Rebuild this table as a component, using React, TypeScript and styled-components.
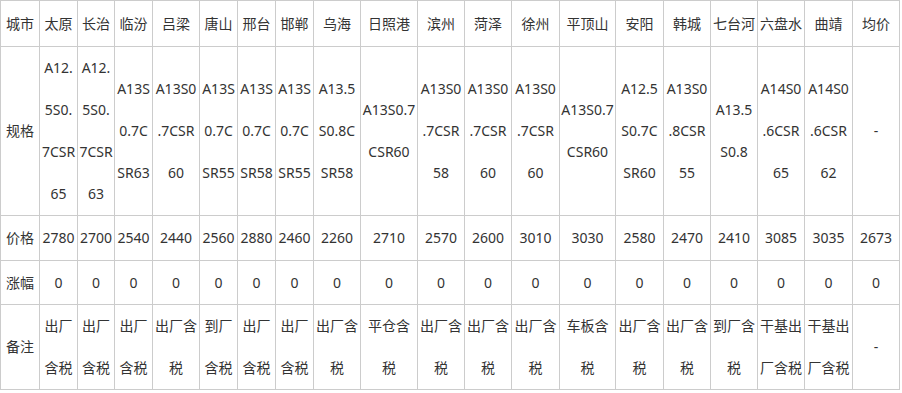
import { createGlobalStyle } from "styled-components";
import styled from "styled-components";

const GlobalStyle = createGlobalStyle`
  html, body {
    margin: 0;
    padding: 0;
    background: #fff;
  }
  body {
    font-family: "Noto Sans", "Noto Sans CJK SC", sans-serif;
    color: #333;
  }
`;

type City = {
  name: string;
  width: number;
  spec: string[];
  price: string;
  change: string;
  note: string[];
};

const cities: City[] = [
  { name: "太原", width: 38, spec: ["A12.", "5S0.", "7CSR", "65"], price: "2780", change: "0", note: ["出厂", "含税"] },
  { name: "长治", width: 37, spec: ["A12.", "5S0.", "7CSR", "63"], price: "2700", change: "0", note: ["出厂", "含税"] },
  { name: "临汾", width: 38, spec: ["A13S", "0.7C", "SR63"], price: "2540", change: "0", note: ["出厂", "含税"] },
  { name: "吕梁", width: 47, spec: ["A13S0", ".7CSR", "60"], price: "2440", change: "0", note: ["出厂含", "税"] },
  { name: "唐山", width: 38, spec: ["A13S", "0.7C", "SR55"], price: "2560", change: "0", note: ["到厂", "含税"] },
  { name: "邢台", width: 38, spec: ["A13S", "0.7C", "SR58"], price: "2880", change: "0", note: ["出厂", "含税"] },
  { name: "邯郸", width: 38, spec: ["A13S", "0.7C", "SR55"], price: "2460", change: "0", note: ["出厂", "含税"] },
  { name: "乌海", width: 47, spec: ["A13.5", "S0.8C", "SR58"], price: "2260", change: "0", note: ["出厂含", "税"] },
  { name: "日照港", width: 57, spec: ["A13S0.7", "CSR60"], price: "2710", change: "0", note: ["平仓含", "税"] },
  { name: "滨州", width: 47, spec: ["A13S0", ".7CSR", "58"], price: "2570", change: "0", note: ["出厂含", "税"] },
  { name: "菏泽", width: 47, spec: ["A13S0", ".7CSR", "60"], price: "2600", change: "0", note: ["出厂含", "税"] },
  { name: "徐州", width: 48, spec: ["A13S0", ".7CSR", "60"], price: "3010", change: "0", note: ["出厂含", "税"] },
  { name: "平顶山", width: 56, spec: ["A13S0.7", "CSR60"], price: "3030", change: "0", note: ["车板含", "税"] },
  { name: "安阳", width: 48, spec: ["A12.5", "S0.7C", "SR60"], price: "2580", change: "0", note: ["出厂含", "税"] },
  { name: "韩城", width: 47, spec: ["A13S0", ".8CSR", "55"], price: "2470", change: "0", note: ["出厂含", "税"] },
  { name: "七台河", width: 47, spec: ["A13.5", "S0.8"], price: "2410", change: "0", note: ["到厂含", "税"] },
  { name: "六盘水", width: 47, spec: ["A14S0", ".6CSR", "65"], price: "3085", change: "0", note: ["干基出", "厂含税"] },
  { name: "曲靖", width: 48, spec: ["A14S0", ".6CSR", "62"], price: "3035", change: "0", note: ["干基出", "厂含税"] },
  { name: "均价", width: 47, spec: ["-"], price: "2673", change: "0", note: ["-"] },
];

export default function App() {
  return (
    <>
      <GlobalStyle />
      <PriceTable>
        <colgroup>
          <col style={{ width: 39 }} />
          {cities.map((c) => (
            <col key={c.name} style={{ width: c.width }} />
          ))}
        </colgroup>
        <tbody>
          <Row $h={46}>
            <Cell>城市</Cell>
            {cities.map((c) => (
              <Cell key={c.name}>{c.name}</Cell>
            ))}
          </Row>
          <Row $h={169}>
            <Cell>规格</Cell>
            {cities.map((c) => (
              <Cell key={c.name}>
                {c.spec.map((l, i) => (
                  <Line key={i}>{l}</Line>
                ))}
              </Cell>
            ))}
          </Row>
          <Row $h={45}>
            <Cell>价格</Cell>
            {cities.map((c) => (
              <Cell key={c.name}>{c.price}</Cell>
            ))}
          </Row>
          <Row $h={44}>
            <Cell>涨幅</Cell>
            {cities.map((c) => (
              <Cell key={c.name}>{c.change}</Cell>
            ))}
          </Row>
          <Row $h={85}>
            <Cell>备注</Cell>
            {cities.map((c) => (
              <Cell key={c.name}>
                {c.note.map((l, i) => (
                  <Line key={i}>{l}</Line>
                ))}
              </Cell>
            ))}
          </Row>
        </tbody>
      </PriceTable>
    </>
  );
}

const PriceTable = styled.table`
  width: 899px;
  table-layout: fixed;
  border-collapse: collapse;
  font-size: 14px;
`;

const Row = styled.tr<{ $h: number }>`
  height: ${(props) => props.$h}px;
`;

const Cell = styled.td`
  border: 1px solid #cccccc;
  padding: 0;
  text-align: center;
  vertical-align: middle;
  line-height: 42px;
  white-space: nowrap;
  overflow: hidden;
`;

const Line = styled.span`
  display: block;
`;
